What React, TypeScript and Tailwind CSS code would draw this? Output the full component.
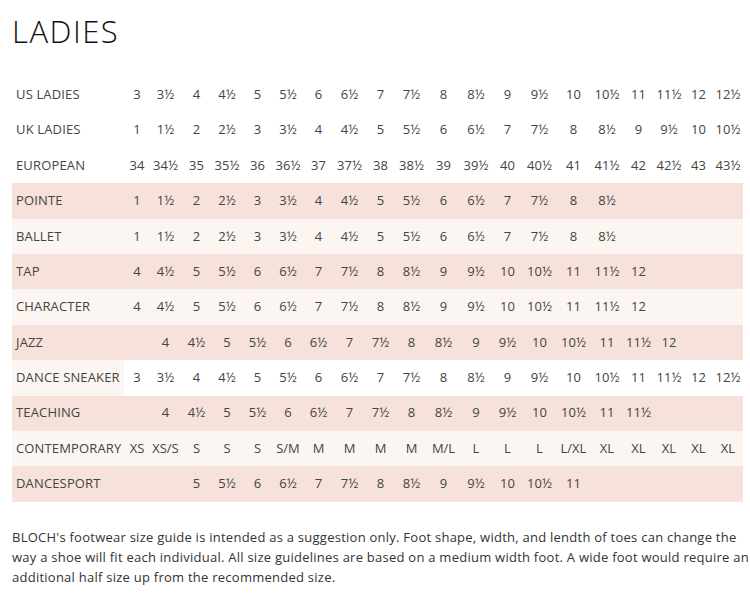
import React from "react";

const WIDTHS = [26, 31, 31, 30, 31, 30, 31, 31, 31, 31, 33, 32, 31, 33, 35, 32, 31, 30, 29, 30];

type Row = { label: string; values: string[]; bg: "white" | "pink" | "light" | "sneaker" };

const US = ["3", "3½", "4", "4½", "5", "5½", "6", "6½", "7", "7½", "8", "8½", "9", "9½", "10", "10½", "11", "11½", "12", "12½"];
const UK = ["1", "1½", "2", "2½", "3", "3½", "4", "4½", "5", "5½", "6", "6½", "7", "7½", "8", "8½", "9", "9½", "10", "10½"];
const EU = ["34", "34½", "35", "35½", "36", "36½", "37", "37½", "38", "38½", "39", "39½", "40", "40½", "41", "41½", "42", "42½", "43", "43½"];
const POINTE = ["1", "1½", "2", "2½", "3", "3½", "4", "4½", "5", "5½", "6", "6½", "7", "7½", "8", "8½"];
const TAP = ["4", "4½", "5", "5½", "6", "6½", "7", "7½", "8", "8½", "9", "9½", "10", "10½", "11", "11½", "12"];
const JAZZ = ["", "4", "4½", "5", "5½", "6", "6½", "7", "7½", "8", "8½", "9", "9½", "10", "10½", "11", "11½", "12"];
const TEACH = ["", "4", "4½", "5", "5½", "6", "6½", "7", "7½", "8", "8½", "9", "9½", "10", "10½", "11", "11½"];
const CONT = ["XS", "XS/S", "S", "S", "S", "S/M", "M", "M", "M", "M", "M/L", "L", "L", "L", "L/XL", "XL", "XL", "XL", "XL", "XL"];
const SPORT = ["", "", "5", "5½", "6", "6½", "7", "7½", "8", "8½", "9", "9½", "10", "10½", "11"];

const ROWS: Row[] = [
  { label: "US LADIES", values: US, bg: "white" },
  { label: "UK LADIES", values: UK, bg: "white" },
  { label: "EUROPEAN", values: EU, bg: "white" },
  { label: "POINTE", values: POINTE, bg: "pink" },
  { label: "BALLET", values: POINTE, bg: "light" },
  { label: "TAP", values: TAP, bg: "pink" },
  { label: "CHARACTER", values: TAP, bg: "light" },
  { label: "JAZZ", values: JAZZ, bg: "pink" },
  { label: "DANCE SNEAKER", values: US, bg: "sneaker" },
  { label: "TEACHING", values: TEACH, bg: "pink" },
  { label: "CONTEMPORARY", values: CONT, bg: "light" },
  { label: "DANCESPORT", values: SPORT, bg: "pink" },
];

function rowBg(bg: Row["bg"]) {
  if (bg === "pink") return "bg-[#f6e2da]";
  if (bg === "light") return "bg-[#fcf6f2]";
  return "bg-white";
}

export default function App() {
  return (
    <div
      className="w-[750px] h-[601px] bg-white overflow-hidden text-[#444]"
      style={{ fontFamily: "'Open Sans', 'Liberation Sans', sans-serif" }}
    >
      <h1 className="pl-3 pt-[13px] text-[31px] leading-[36px] font-light text-[#111] tracking-[1.5px]">LADIES</h1>
      <div className="ml-3 mt-[28px] w-[731px] text-[13px]">
        {ROWS.map((r) => (
          <div key={r.label} className={`flex h-[35.4px] items-center ${rowBg(r.bg)}`}>
            <div
              className={`w-[112px] h-full flex items-center pl-1 whitespace-nowrap tracking-[0.15px] ${r.bg === "sneaker" ? "bg-[#fcf6f2]" : ""}`}
            >
              {r.label}
            </div>
            {WIDTHS.map((w, i) => (
              <div key={i} className="h-full flex items-center justify-center whitespace-nowrap" style={{ width: w }}>
                {r.values[i] ?? ""}
              </div>
            ))}
          </div>
        ))}
      </div>
      <p className="mt-[25px] pl-3 pr-1 text-[13px] leading-[20px] text-[#333] whitespace-nowrap tracking-[0.25px]">
        BLOCH's footwear size guide is intended as a suggestion only. Foot shape, width, and lendth of toes can change the
        <br />
        way a shoe will fit each individual. All size guidelines are based on a medium width foot. A wide foot would require an
        <br />
        additional half size up from the recommended size.
      </p>
    </div>
  );
}
